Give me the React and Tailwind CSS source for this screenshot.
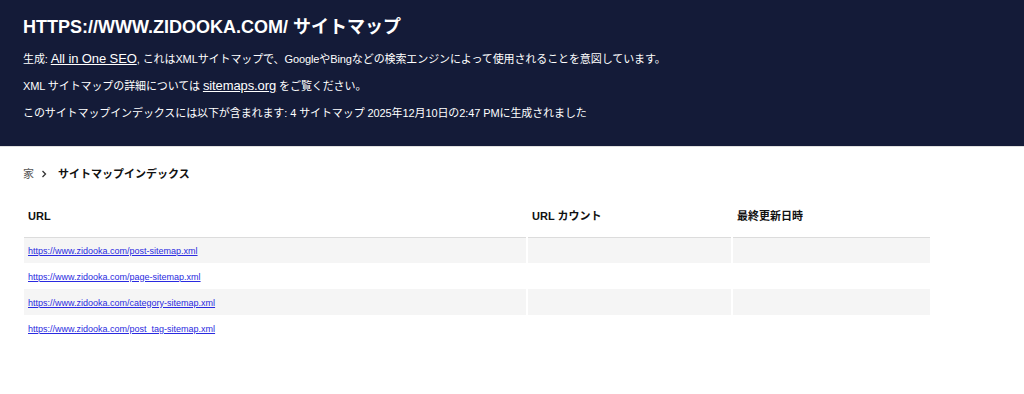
const rows = [
  "https://www.zidooka.com/post-sitemap.xml",
  "https://www.zidooka.com/page-sitemap.xml",
  "https://www.zidooka.com/category-sitemap.xml",
  "https://www.zidooka.com/post_tag-sitemap.xml",
];

export default function App() {
  return (
    <div className="min-h-screen bg-white text-[#141b38] font-['Liberation_Sans','Noto_Sans_CJK_JP',sans-serif]">
      {/* Header */}
      <header className="bg-[#141b38] text-white px-[23px] pt-[15px] h-[147px] border-b border-[#e0e0e0]">
        <h1 className="text-[18px] font-bold leading-[24px]">HTTPS://WWW.ZIDOOKA.COM/ サイトマップ</h1>
        <p className="text-[11px] leading-[16px] mt-[12px] tracking-[-0.1px]">
          生成:{" "}
          <a href="#" className="text-[13px] underline text-white">All in One SEO</a>
          , これはXMLサイトマップで、GoogleやBingなどの検索エンジンによって使用されることを意図しています。
        </p>
        <p className="text-[11px] leading-[16px] mt-[11px] tracking-[-0.1px]">
          XML サイトマップの詳細については{" "}
          <a href="#" className="text-[13px] underline text-white">sitemaps.org</a>{" "}
          をご覧ください。
        </p>
        <p className="text-[11px] leading-[16px] mt-[11px] tracking-[-0.1px]">
          このサイトマップインデックスには以下が含まれます: 4 サイトマップ 2025年12月10日の2:47 PMに生成されました
        </p>
      </header>

      {/* Breadcrumb */}
      <div className="flex items-center px-[23px] mt-[19px] text-[11px] leading-[16px]">
        <span className="text-[#555]">家</span>
        <svg width="8" height="8" viewBox="0 0 8 8" className="ml-[6px] mr-[10px] text-[#333]">
          <path d="M2.5 1l3 3-3 3" fill="none" stroke="currentColor" strokeWidth="1.3" />
        </svg>
        <span className="font-bold text-[#111]">サイトマップインデックス</span>
      </div>

      {/* Table */}
      <div className="px-[22px] mt-[26px]">
        <table className="border-separate border-spacing-x-[2px] border-spacing-y-0 text-left">
          <thead>
            <tr>
              <th className="w-[502px] px-[4px] pb-[12px] text-[11px] font-bold text-[#111]">URL</th>
              <th className="w-[203px] px-[4px] pb-[12px] text-[11px] font-bold text-[#111]">URL カウント</th>
              <th className="w-[197px] px-[4px] pb-[12px] text-[11px] font-bold text-[#111]">最終更新日時</th>
            </tr>
          </thead>
          <tbody>
            {rows.map((url, i) => (
              <tr key={url} className={i % 2 === 0 ? "bg-[#f5f5f5]" : ""}>
                <td className={`h-[26px] px-[4px] pt-[4px] text-[9px] ${i === 0 ? "border-t border-[#dcdcdc]" : ""}`}>
                  <a href="#" className="text-[#2a2ae0] underline">{url}</a>
                </td>
                <td className={i === 0 ? "border-t border-[#dcdcdc]" : ""}></td>
                <td className={i === 0 ? "border-t border-[#dcdcdc]" : ""}></td>
              </tr>
            ))}
          </tbody>
        </table>
      </div>
    </div>
  );
}
